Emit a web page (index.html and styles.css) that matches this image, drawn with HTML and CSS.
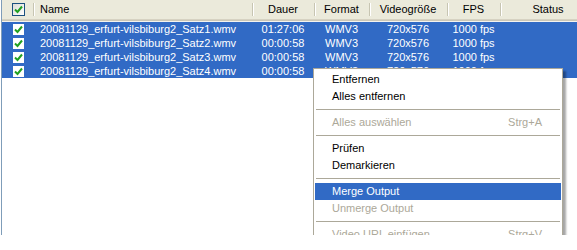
FILE: index.html
```html
<!DOCTYPE html>
<html lang="de">

<head>
    <meta charset="UTF-8">
    <title>Dateiliste</title>
    <link rel="stylesheet" href="styles.css">
</head>

<body>
    <div class="frame">
        <div class="list">
            <div class="row head">
                <div class="cell check"><span class="box head-box"><svg width="9" height="9" viewBox="0 0 9 9"><path d="M1 4.5 L3.5 7 L8 1.5" fill="none" stroke="#21a121" stroke-width="2"/></svg></span></div>
                <div class="cell name">Name</div>
                <div class="cell mid">Dauer</div>
                <div class="cell mid">Format</div>
                <div class="cell mid">Videogröße</div>
                <div class="cell mid">FPS</div>
                <div class="cell mid">Status</div>
            </div>
            <div class="row sel">
                <div class="cell check"><span class="box"><svg width="9" height="9" viewBox="0 0 9 9"><path d="M1 4.5 L3.5 7 L8 1.5" fill="none" stroke="#21a121" stroke-width="2"/></svg></span></div>
                <div class="cell name">20081129_erfurt-vilsbiburg2_Satz1.wmv</div>
                <div class="cell mid">01:27:06</div>
                <div class="cell mid">WMV3</div>
                <div class="cell mid">720x576</div>
                <div class="cell mid">1000 fps</div>
                <div class="cell mid"></div>
            </div>
            <div class="row sel">
                <div class="cell check"><span class="box"><svg width="9" height="9" viewBox="0 0 9 9"><path d="M1 4.5 L3.5 7 L8 1.5" fill="none" stroke="#21a121" stroke-width="2"/></svg></span></div>
                <div class="cell name">20081129_erfurt-vilsbiburg2_Satz2.wmv</div>
                <div class="cell mid">00:00:58</div>
                <div class="cell mid">WMV3</div>
                <div class="cell mid">720x576</div>
                <div class="cell mid">1000 fps</div>
                <div class="cell mid"></div>
            </div>
            <div class="row sel">
                <div class="cell check"><span class="box"><svg width="9" height="9" viewBox="0 0 9 9"><path d="M1 4.5 L3.5 7 L8 1.5" fill="none" stroke="#21a121" stroke-width="2"/></svg></span></div>
                <div class="cell name">20081129_erfurt-vilsbiburg2_Satz3.wmv</div>
                <div class="cell mid">00:00:58</div>
                <div class="cell mid">WMV3</div>
                <div class="cell mid">720x576</div>
                <div class="cell mid">1000 fps</div>
                <div class="cell mid"></div>
            </div>
            <div class="row sel">
                <div class="cell check"><span class="box"><svg width="9" height="9" viewBox="0 0 9 9"><path d="M1 4.5 L3.5 7 L8 1.5" fill="none" stroke="#21a121" stroke-width="2"/></svg></span></div>
                <div class="cell name">20081129_erfurt-vilsbiburg2_Satz4.wmv</div>
                <div class="cell mid">00:00:58</div>
                <div class="cell mid">WMV3</div>
                <div class="cell mid">720x576</div>
                <div class="cell mid">1000 fps</div>
                <div class="cell mid"></div>
            </div>
        </div>

        <div class="menu">
            <div class="item">Entfernen</div>
            <div class="item">Alles entfernen</div>
            <div class="sep"></div>
            <div class="item off">Alles auswählen<span class="key">Strg+A</span></div>
            <div class="sep"></div>
            <div class="item">Prüfen</div>
            <div class="item">Demarkieren</div>
            <div class="sep"></div>
            <div class="item hot">Merge Output</div>
            <div class="item off">Unmerge Output</div>
            <div class="sep"></div>
            <div class="item off">Video URL einfügen<span class="key">Strg+V</span></div>
        </div>
    </div>
</body>

</html>
```

FILE: styles.css
```css
body {
    margin: 0;
    background-color: #fff;
    font-family: "Liberation Sans", Arial, sans-serif;
    font-size: 11px;
}

.frame {
    position: relative;
    width: 576px;
    height: 235px;
    margin-left: 1px;
    border-left: 1px solid #7f9db9;
    overflow: hidden;
    background-color: #fff;
}

.list {
    width: 620px;
}

.row {
    display: grid;
    grid-template-columns: 31px 219px 62px 55px 78px 53px 96px;
    height: 14px;
    line-height: 14px;
}

.head {
    height: 19px;
    line-height: 19px;
    margin-bottom: 2px;
    background-color: #ebeadb;
    border-bottom: 1px solid #d6d2c2;
    box-shadow: 0 1px 0 #cbc7b8, 0 2px 0 #f4f3ee;
    color: #000;
}

.head .cell + .cell {
    position: relative;
}

.head .cell + .cell::before {
    content: "";
    position: absolute;
    left: 0;
    top: 3px;
    bottom: 3px;
    width: 1px;
    background-color: #c7c5b2;
    box-shadow: 1px 0 0 #fff;
}

.sel {
    background-color: #316ac5;
    color: #fff;
}

.cell {
    white-space: nowrap;
    overflow: hidden;
}

.check {
    display: flex;
    align-items: center;
    padding-left: 11px;
}

.name {
    padding-left: 7px;
}

.mid {
    text-align: center;
}

.box {
    display: flex;
    align-items: center;
    justify-content: center;
    width: 11px;
    height: 11px;
    background-color: #fff;
}

.head-box {
    width: 11px;
    height: 11px;
    margin-left: -1px;
    border: 1px solid #1c5180;
    background: linear-gradient(135deg, #dcdcd7, #fff);
}

.menu {
    position: absolute;
    left: 311px;
    top: 68px;
    width: 246px;
    padding: 2px 1px;
    background-color: #fff;
    border: 1px solid #aca899;
    box-shadow: 3px 3px 2px rgba(0, 0, 0, 0.35);
    color: #000;
}

.item {
    display: flex;
    justify-content: space-between;
    height: 17px;
    line-height: 17px;
    padding: 0 19px 0 17px;
}

.item.off {
    color: #aca899;
}

.item.hot {
    background-color: #316ac5;
    color: #fff;
}

.sep {
    height: 1px;
    margin: 4px 1px;
    background-color: #aca899;
}
```
